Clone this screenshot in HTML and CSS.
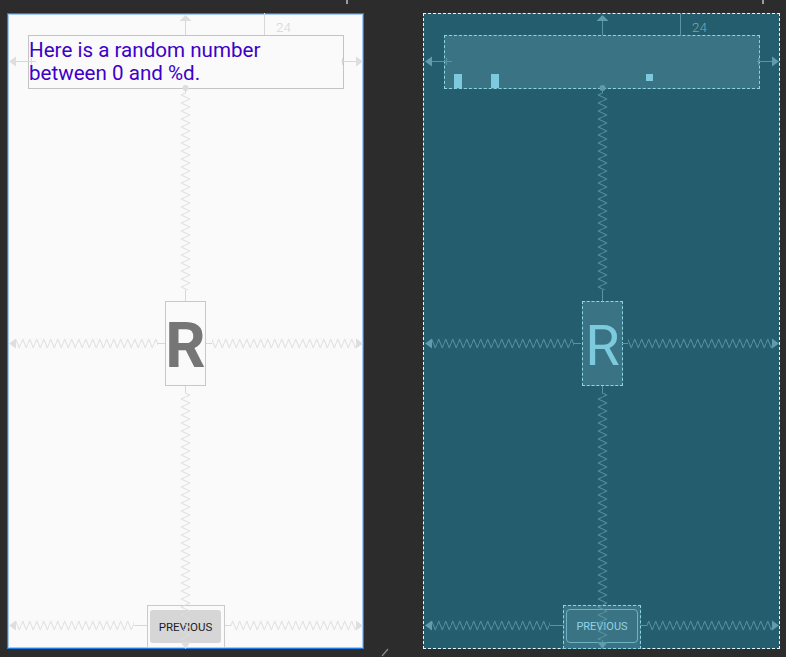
FILE: index.html
```html
<!DOCTYPE html>
<html>
<head>
<meta charset="utf-8">
<link rel="stylesheet" href="styles.css">
</head>
<body>
<span class="ruler-tick ruler-tick--a"></span>
<span class="ruler-tick ruler-tick--b"></span>
<svg class="slash" width="10" height="10" viewBox="0 0 10 10"><path class="slash-line" d="M8 1L2 8"/></svg>
<div class="canvas">
  <div class="device device--design">
    <div class="txt-box">Here is a random number<br>between 0 and %d.</div>
    <div class="r-box">R</div>
    <div class="btn-box"><div class="btn">PREVIOUS</div></div>
    <svg class="cons" width="357" height="636" viewBox="0 0 357 636">
      <defs>
        <pattern id="zhL" width="7" height="10" patternUnits="userSpaceOnUse"><path class="zz" d="M0 5L1.75 .6 5.25 9.4 7 5"/></pattern>
        <pattern id="zvL" width="10" height="8" patternUnits="userSpaceOnUse"><path class="zz" d="M5 0L.6 2 9.4 6 5 8"/></pattern>
      </defs>
      <path class="ln" d="M178.5 8V22M257.5 0V22"/>
      <path class="ar" d="M178.5 2L184.5 8H172.5Z"/>
      <text class="lbl" x="269" y="19">24</text>
      <path class="ar" d="M2 48.5L9 43.5V53.5Z M356 48.5L349 43.5V53.5Z"/>
      <path class="ln" d="M9 48.5H29M24.5 45V52M334 48.5H349M335.5 45V52"/>
      <circle class="ar" cx="178.5" cy="75" r="3"/>
      <path class="ln" d="M178.5 75V80M178.5 277V288"/>
      <g transform="translate(173.5 0)"><rect class="zr" x="0" y="80" width="10" height="197" fill="url(#zvL)"/></g>
      <path class="ar" d="M2 330.5L9 325.5V335.5Z M356 330.5L349 325.5V335.5Z"/>
      <g transform="translate(0 325.5)">
        <rect class="zr" x="9" y="0" width="142" height="10" fill="url(#zhL)"/>
        <rect class="zr" x="205" y="0" width="144" height="10" fill="url(#zhL)"/>
      </g>
      <path class="ln" d="M151 330.5H158M199 330.5H205"/>
      <path class="ln" d="M178.5 373V380M178.5 627V630"/>
      <g transform="translate(173.5 0)"><rect class="zr" x="0" y="380" width="10" height="247" fill="url(#zvL)"/></g>
      <path class="ar" d="M178.5 636L173.5 629H183.5Z"/>
      <path class="ar" d="M2 612.5L9 607.5V617.5Z M356 612.5L349 607.5V617.5Z"/>
      <g transform="translate(0 607.5)">
        <rect class="zr" x="9" y="0" width="118" height="10" fill="url(#zhL)"/>
        <rect class="zr" x="224" y="0" width="125" height="10" fill="url(#zhL)"/>
      </g>
      <path class="ln" d="M127 612.5H140M218 612.5H224"/>
    </svg>
  </div>
  <div class="device device--blueprint">
    <div class="txt-box txt-box--bp">
      <span class="ph ph--a"></span>
      <span class="ph ph--b"></span>
      <span class="ph ph--c"></span>
    </div>
    <div class="r-box r-box--bp">R</div>
    <div class="btn-box btn-box--bp"><div class="btn btn--bp">PREVIOUS</div></div>
    <svg class="cons" width="357" height="636" viewBox="0 0 357 636">
      <defs>
        <pattern id="zhB" width="7" height="10" patternUnits="userSpaceOnUse"><path class="zz" d="M0 5L1.75 .6 5.25 9.4 7 5"/></pattern>
        <pattern id="zvB" width="10" height="8" patternUnits="userSpaceOnUse"><path class="zz" d="M5 0L.6 2 9.4 6 5 8"/></pattern>
      </defs>
      <path class="ln" d="M179.5 8V22M257.5 0V22"/>
      <path class="ar" d="M179.5 2L185.5 8H173.5Z"/>
      <text class="lbl" x="269" y="19">24</text>
      <path class="ar" d="M2 48.5L9 43.5V53.5Z M356 48.5L349 43.5V53.5Z"/>
      <path class="ln" d="M9 48.5H29M23.5 45V52M334 48.5H349M335.5 45V52"/>
      <circle class="ar" cx="179.5" cy="75" r="3"/>
      <path class="ln" d="M179.5 75V80M179.5 277V288"/>
      <g transform="translate(174.5 0)"><rect class="zr" x="0" y="80" width="10" height="197" fill="url(#zvB)"/></g>
      <path class="ar" d="M2 330.5L9 325.5V335.5Z M356 330.5L349 325.5V335.5Z"/>
      <g transform="translate(0 325.5)">
        <rect class="zr" x="9" y="0" width="142" height="10" fill="url(#zhB)"/>
        <rect class="zr" x="205" y="0" width="144" height="10" fill="url(#zhB)"/>
      </g>
      <path class="ln" d="M151 330.5H158M199 330.5H205"/>
      <path class="ln" d="M179.5 373V380M179.5 627V630"/>
      <g transform="translate(174.5 0)"><rect class="zr" x="0" y="380" width="10" height="247" fill="url(#zvB)"/></g>
      <path class="ar" d="M179.5 636L174.5 629H184.5Z"/>
      <path class="ar" d="M2 612.5L9 607.5V617.5Z M356 612.5L349 607.5V617.5Z"/>
      <g transform="translate(0 607.5)">
        <rect class="zr" x="9" y="0" width="118" height="10" fill="url(#zhB)"/>
        <rect class="zr" x="224" y="0" width="125" height="10" fill="url(#zhB)"/>
      </g>
      <path class="ln" d="M127 612.5H140M218 612.5H224"/>
    </svg>
  </div>
</div>
</body>
</html>
```
FILE: styles.css
```css
html, body {
  margin: 0;
  padding: 0;
}
body {
  width: 786px;
  height: 657px;
  overflow: hidden;
  position: relative;
  background: #2c2c2d;
  font-family: Roboto, "Liberation Sans", sans-serif;
}
.ruler-tick {
  position: absolute;
  top: 0;
  width: 2px;
  height: 4px;
  background: #9c9c9c;
}
.ruler-tick--a { left: 346px; }
.ruler-tick--b { left: 762px; }
.slash {
  position: absolute;
  left: 380px;
  top: 648px;
}
.slash-line {
  stroke: #8a8a8a;
  stroke-width: 1.2;
  fill: none;
}
.canvas {
  display: flex;
  gap: 59px;
  padding: 13px 0 0 7px;
}
.device {
  position: relative;
  flex: none;
  width: 357px;
  height: 636px;
  box-sizing: border-box;
}
.device--design {
  background: #fafafa;
  border: 1px solid #1f7ee6;
  box-shadow: inset 0 0 0 1px rgba(60, 145, 240, 0.45);
}
.device--blueprint {
  background: #245d6d;
  border: 1px dashed #eaf6f9;
}
.cons {
  position: absolute;
  left: -1px;
  top: -1px;
  pointer-events: none;
}
.zz { fill: none; stroke: #dcdcdc; stroke-width: 1; }
.zr { stroke: none; }
.ln { fill: none; stroke: #d8d8d8; stroke-width: 1; }
.ar { fill: #dedede; stroke: none; }
.lbl { fill: #d6d6d6; font-family: Roboto, "Liberation Sans", sans-serif; font-size: 13.5px; font-weight: 300; }
.device--blueprint .zz { stroke: #5a95a6; }
.device--blueprint .ln { stroke: #5a95a6; }
.device--blueprint .ar { fill: #5f9cad; }
.device--blueprint .lbl { fill: #72a9b8; }

.txt-box {
  position: absolute;
  left: 20px;
  top: 21px;
  width: 316px;
  height: 54px;
  box-sizing: border-box;
  border: 1px solid #c4c4c4;
  padding: 3px 0 0 0;
  font-size: 20.6px;
  line-height: 23px;
  color: #3e00c8;
  white-space: nowrap;
}
.txt-box--bp {
  border: 1px dashed #8fd4e5;
  background: #3a7384;
}
.ph {
  position: absolute;
  background: #7dc9de;
}
.ph--a { left: 9px; top: 38px; width: 8px; height: 14px; }
.ph--b { left: 46px; top: 38px; width: 8px; height: 14px; }
.ph--c { left: 201px; top: 38px; width: 7px; height: 7px; }

.r-box {
  position: absolute;
  left: 157px;
  top: 287px;
  width: 41px;
  height: 85px;
  box-sizing: border-box;
  border: 1px solid #c8c8c8;
  display: flex;
  justify-content: center;
  align-items: center;
  padding-top: 4px;
  font-size: 63px;
  font-weight: 700;
  line-height: 1;
  color: #767676;
}
.r-box--bp {
  left: 158px;
  border: 1px dashed #8fd4e5;
  background: #3a7384;
  font-weight: 400;
  font-size: 56px;
  color: #7dc9de;
}

.btn-box {
  position: absolute;
  left: 139px;
  top: 591px;
  width: 78px;
  height: 43px;
  box-sizing: border-box;
  border: 1px solid #cacaca;
  padding: 4px 0 0 2px;
}
.btn {
  width: 71px;
  height: 33px;
  box-sizing: border-box;
  border-radius: 3px;
  background: #d6d6d6;
  display: flex;
  justify-content: center;
  align-items: center;
  font-size: 11.5px;
  font-weight: 400;
  color: #1c1c1c;
}
.btn-box--bp {
  border: 1px dashed #8fd4e5;
  background: #3a7384;
  height: 44px;
  padding: 3px 0 0 2px;
}
.btn--bp {
  width: 72px;
  height: 34px;
  background: transparent;
  border: 1px solid #6cb3c6;
  border-radius: 4px;
  font-size: 11px;
  font-weight: 400;
  color: #8fd4e5;
}
```
